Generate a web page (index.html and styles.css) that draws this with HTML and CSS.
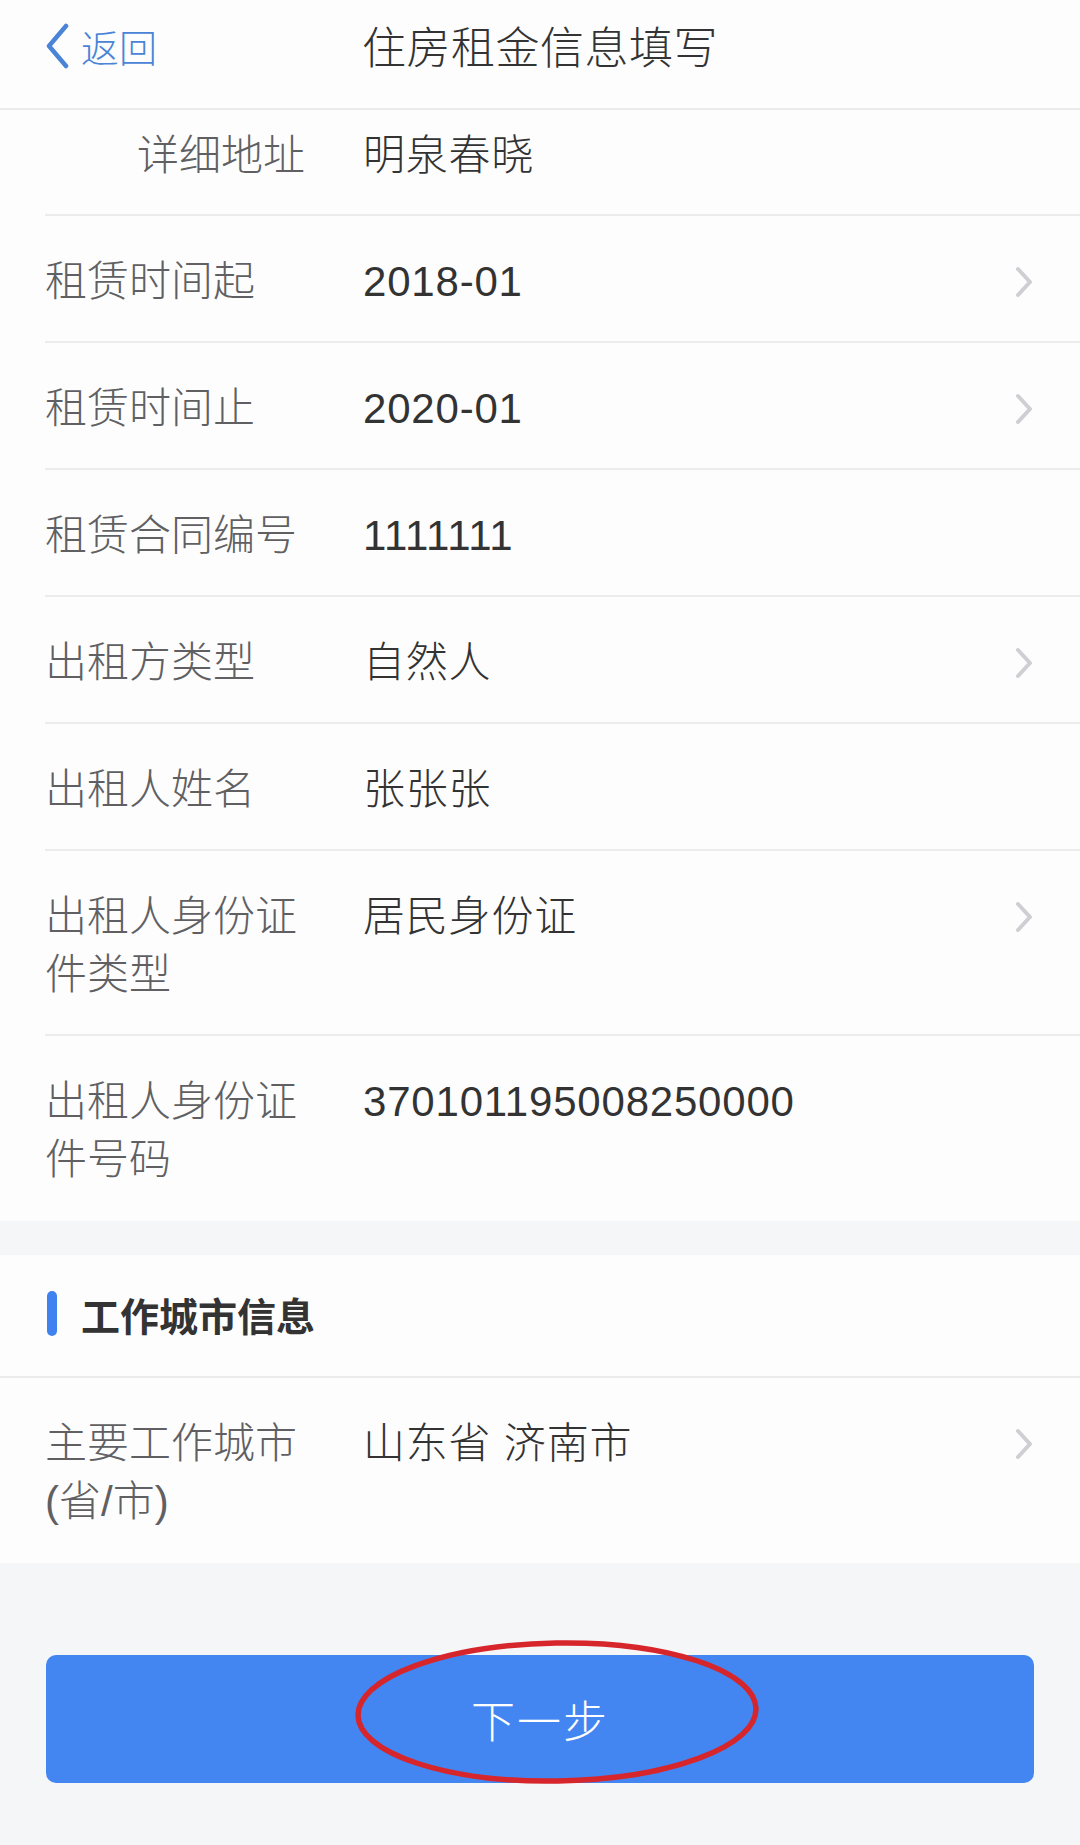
FILE: index.html
```html
<!DOCTYPE html>
<html lang="zh-CN">
<head>
  <meta charset="UTF-8" />
  <meta name="viewport" content="width=device-width, initial-scale=1.0"/>
  <title>住房租金信息填写</title>
  <link rel="stylesheet" href="styles.css">
</head>
<body>
  <header class="topbar">
    <a class="back" href="#">
      <svg class="back-icon" viewBox="0 0 26 46" width="26" height="46">
        <path d="M22 3 L5 23 L22 43" fill="none" stroke="#4a84d6" stroke-width="4.5" stroke-linecap="round" stroke-linejoin="round"/>
      </svg>
      <span>返回</span>
    </a>
    <h1>住房租金信息填写</h1>
    <span></span>
  </header>

  <section class="group">
    <div class="row row-first">
      <div class="label label-indent">详细地址</div>
      <div class="value">明泉春晓</div>
    </div>
    <div class="row">
      <div class="label">租赁时间起</div>
      <div class="value">2018-01</div>
      <div class="arrow"><svg viewBox="0 0 20 32" width="20" height="32"><path d="M4 3 L16 16 L4 29" fill="none" stroke="#cfcfd3" stroke-width="4" stroke-linecap="round" stroke-linejoin="round"/></svg></div>
    </div>
    <div class="row">
      <div class="label">租赁时间止</div>
      <div class="value">2020-01</div>
      <div class="arrow"><svg viewBox="0 0 20 32" width="20" height="32"><path d="M4 3 L16 16 L4 29" fill="none" stroke="#cfcfd3" stroke-width="4" stroke-linecap="round" stroke-linejoin="round"/></svg></div>
    </div>
    <div class="row">
      <div class="label">租赁合同编号</div>
      <div class="value">1111111</div>
    </div>
    <div class="row">
      <div class="label">出租方类型</div>
      <div class="value">自然人</div>
      <div class="arrow"><svg viewBox="0 0 20 32" width="20" height="32"><path d="M4 3 L16 16 L4 29" fill="none" stroke="#cfcfd3" stroke-width="4" stroke-linecap="round" stroke-linejoin="round"/></svg></div>
    </div>
    <div class="row">
      <div class="label">出租人姓名</div>
      <div class="value">张张张</div>
    </div>
    <div class="row">
      <div class="label">出租人身份证件类型</div>
      <div class="value">居民身份证</div>
      <div class="arrow"><svg viewBox="0 0 20 32" width="20" height="32"><path d="M4 3 L16 16 L4 29" fill="none" stroke="#cfcfd3" stroke-width="4" stroke-linecap="round" stroke-linejoin="round"/></svg></div>
    </div>
    <div class="row row-last">
      <div class="label">出租人身份证件号码</div>
      <div class="value">370101195008250000</div>
    </div>
  </section>

  <section class="group group-city">
    <div class="section-title">
      <span class="bar"></span>
      <h2>工作城市信息</h2>
    </div>
    <div class="row row-last">
      <div class="label">主要工作城市(省/市)</div>
      <div class="value">山东省 济南市</div>
      <div class="arrow"><svg viewBox="0 0 20 32" width="20" height="32"><path d="M4 3 L16 16 L4 29" fill="none" stroke="#cfcfd3" stroke-width="4" stroke-linecap="round" stroke-linejoin="round"/></svg></div>
    </div>
  </section>

  <div class="footer">
    <button class="next" type="button">
      下一步
      <svg class="circle" viewBox="0 0 410 150" width="410" height="150">
        <ellipse cx="205" cy="75" rx="199" ry="69" fill="none" stroke="#d6262c" stroke-width="5.5" transform="rotate(-1 205 75)"/>
      </svg>
    </button>
  </div>
</body>
</html>
```

FILE: styles.css
```css
* {
  box-sizing: border-box;
  margin: 0;
  padding: 0;
}

body {
  width: 1080px;
  min-height: 1845px;
  background-color: #f5f6f8;
  font-family: "Liberation Sans", "Noto Sans CJK SC", sans-serif;
  font-weight: 300;
  color: #333;
}

.topbar {
  display: grid;
  grid-template-columns: 1fr auto 1fr;
  align-items: center;
  height: 110px;
  padding-bottom: 18px;
  background: #fdfdfe;
  border-bottom: 2px solid #ebebee;
}

.back {
  display: flex;
  align-items: center;
  gap: 11px;
  padding-left: 44px;
  color: #4a84d6;
  font-size: 38px;
  text-decoration: none;
}

.back-icon {
  margin-top: 2px;
}

.topbar h1 {
  font-size: 44px;
  font-weight: 300;
  color: #333;
  letter-spacing: 0.5px;
}

.group {
  background: #fdfdfe;
  padding-left: 45px;
}

.row {
  display: flex;
  align-items: flex-start;
  padding: 37px 0 30px;
  border-bottom: 2px solid #ececef;
  font-size: 42px;
  line-height: 58px;
}

.row-first {
  padding-top: 17px;
  padding-bottom: 29px;
}

.row-last {
  border-bottom: none;
  padding-bottom: 32px;
}

.label {
  flex: 0 0 262px;
  margin-right: 56px;
  color: #606062;
}

.label-indent {
  padding-left: 92px;
}

.value {
  flex: 1;
  color: #333;
  letter-spacing: 0.8px;
}

.arrow {
  display: flex;
  align-items: center;
  height: 58px;
  margin-right: 46px;
}

.group-city {
  margin-top: 34px;
  padding-left: 0;
}

.group-city .row {
  padding-left: 45px;
}

.section-title {
  display: flex;
  align-items: center;
  gap: 24px;
  height: 123px;
  padding-left: 47px;
  padding-bottom: 4px;
  border-bottom: 2px solid #ebebee;
}

.bar {
  width: 10px;
  height: 45px;
  border-radius: 5px;
  background: #3f82f0;
}

.section-title h2 {
  font-size: 39px;
  font-weight: bold;
  color: #333;
}

.footer {
  padding: 92px 46px 60px;
}

.next {
  position: relative;
  display: block;
  width: 100%;
  height: 128px;
  border: none;
  border-radius: 10px;
  background-color: #4386f2;
  color: #fff;
  font-family: inherit;
  font-weight: 300;
  font-size: 44px;
  letter-spacing: 2px;
}

.circle {
  position: absolute;
  left: 306px;
  top: -18px;
}
```
